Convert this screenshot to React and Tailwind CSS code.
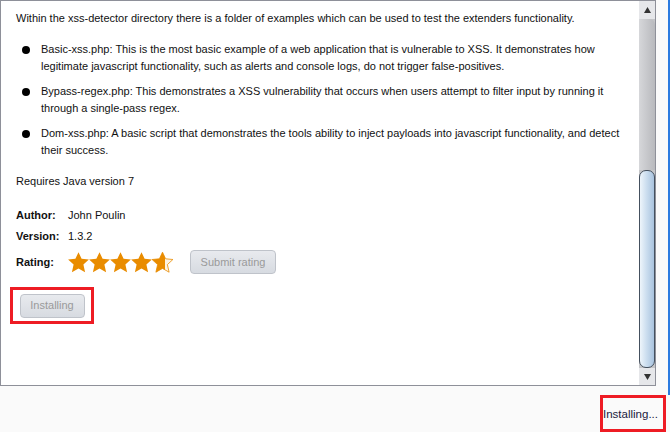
import React from "react";

const Star = ({ half }) => (
  <svg width="21" height="21" viewBox="0 0 21 21">
    <polygon
      points="10.5,0.2 13.6,6.8 20.9,7.5 15.4,12.6 17.1,20.2 10.5,16.4 3.9,20.2 5.6,12.6 0.1,7.5 7.4,6.8"
      fill={half ? "url(#halfStar)" : "#e98c00"}
      stroke={half ? "#e98c00" : "none"}
      strokeWidth="0.8"
    />
  </svg>
);

const Bullet = ({ children }) => (
  <div className="flex items-start">
    <span className="w-[8px] h-[8px] mt-[5px] ml-[6px] mr-[11px] rounded-full bg-black shrink-0" />
    <p>{children}</p>
  </div>
);

const Button = ({ children, className = "" }) => (
  <div
    className={
      "flex items-center justify-center h-[24px] rounded-[4px] border border-[#bfc3ca] bg-gradient-to-b from-[#e8eaee] to-[#d7dbe1] text-[#9a9a9a] " +
      className
    }
  >
    {children}
  </div>
);

export default function App() {
  return (
    <div
      className="w-[670px] h-[432px] bg-[#fafafa] flex flex-col text-[11px] text-[#111]"
      style={{ fontFamily: '"Liberation Sans", Arial, sans-serif' }}
    >
      <svg width="0" height="0" className="absolute">
        <defs>
          <linearGradient id="halfStar" x1="0" x2="1" y1="0" y2="0">
            <stop offset="0.62" stopColor="#e98c00" />
            <stop offset="0.62" stopColor="#fdf3e3" />
          </linearGradient>
        </defs>
      </svg>
      <div className="flex h-[386px]">
        <div className="w-[656px] h-[386px] border border-[#8e9099] bg-white flex">
          <div className="flex-1 pl-[15px] pt-[9px] leading-[17px]">
            <p>
              Within the xss-detector directory there is a folder of examples which can be used to test the extenders functionality.
            </p>
            <div className="mt-[14px] flex flex-col gap-[8px] pr-[2px]">
              <Bullet>
                Basic-xss.php: This is the most basic example of a web application that is vulnerable to XSS. It demonstrates how legitimate javascript functionality, such as alerts and console logs, do not trigger false-positives.
              </Bullet>
              <Bullet>
                Bypass-regex.php: This demonstrates a XSS vulnerability that occurs when users attempt to filter input by running it through a single-pass regex.
              </Bullet>
              <Bullet>
                Dom-xss.php: A basic script that demonstrates the tools ability to inject payloads into javascript functionality, and detect their success.
              </Bullet>
            </div>
            <p className="mt-[14px]">Requires Java version 7</p>
            <div className="mt-[17px] flex items-center">
              <span className="w-[52px] font-bold">Author:</span>
              <span>John Poulin</span>
            </div>
            <div className="mt-[4px] flex items-center">
              <span className="w-[52px] font-bold">Version:</span>
              <span>1.3.2</span>
            </div>
            <div className="mt-[5px] flex items-center">
              <span className="w-[52px] font-bold">Rating:</span>
              <div className="flex">
                <Star />
                <Star />
                <Star />
                <Star />
                <Star half />
              </div>
              <Button className="ml-[17px] w-[86px]">Submit rating</Button>
            </div>
            <div className="mt-[13px] -ml-[6px] w-[84px] h-[37px] border-[3px] border-[#ee1c24] flex items-center justify-center">
              <Button className="w-[65px]">Installing</Button>
            </div>
          </div>
          <div className="w-[16px] flex flex-col bg-[#c4c5c8]">
            <div className="h-[18px] bg-[#e6e7ea] flex items-center justify-center">
              <svg width="7" height="6" viewBox="0 0 7 6">
                <polygon points="3.5,0 7,6 0,6" fill="#333" />
              </svg>
            </div>
            <div className="h-[151px] bg-gradient-to-r from-[#d6d7da] to-[#b8b9bd] rounded-tr-[6px]" />
            <div className="flex-1 rounded-[7px] border border-[#44505e] bg-gradient-to-r from-[#eef5fb] via-[#c9dcee] to-[#a9c3de]" />
            <div className="h-[17px] bg-[#e6e7ea] flex items-center justify-center">
              <svg width="7" height="6" viewBox="0 0 7 6">
                <polygon points="0,0 7,0 3.5,6" fill="#333" />
              </svg>
            </div>
          </div>
        </div>
        <div className="ml-[12px] w-[2px] h-[395px] bg-[#2c7be0]" />
      </div>
      <div className="flex justify-end pr-[4px] pt-[9px]">
        <div className="w-[66px] h-[37px] border-[3px] border-[#ee1c24] flex items-center justify-end pr-[5px] pt-[2px] text-[11.5px] text-[#1a1a40]">
          Installing...
        </div>
      </div>
    </div>
  );
}
